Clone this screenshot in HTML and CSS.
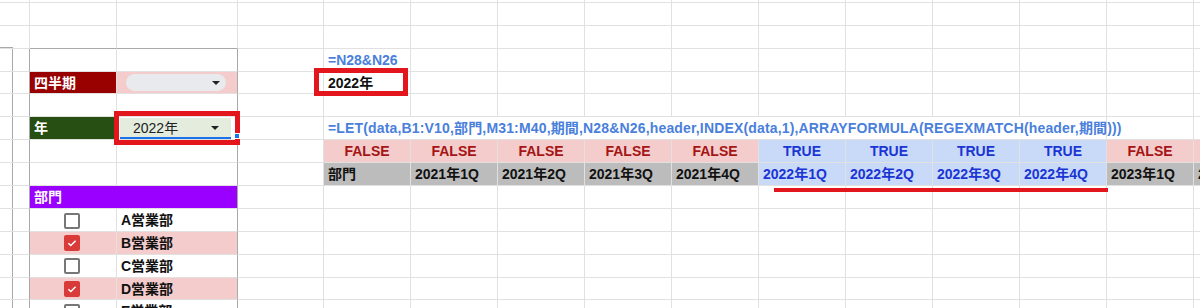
FILE: index.html
```html
<!DOCTYPE html>
<html lang="ja">
<head>
    <meta charset="UTF-8">
    <meta name="viewport" content="width=device-width, initial-scale=1.0">
    <title>期間フィルター</title>
    <link rel="stylesheet" href="styles.css">
</head>
<body>
    <table class="sheet">
        <colgroup>
            <col class="c-a">
            <col class="c-b">
            <col class="c-c">
            <col class="c-d">
            <col span="11" class="c-e">
        </colgroup>
        <tr><td></td><td></td><td></td><td></td><td></td><td></td><td></td><td></td><td></td><td></td><td></td><td></td><td></td><td></td><td></td></tr>
        <tr><td></td><td></td><td></td><td></td><td></td><td></td><td></td><td></td><td></td><td></td><td></td><td></td><td></td><td></td><td></td></tr>
        <tr><td class="side-top"></td><td class="top"></td><td class="top"></td><td></td><td></td><td></td><td></td><td></td><td></td><td></td><td></td><td></td><td></td><td></td><td></td></tr>
        <tr>
            <td class="side"></td><td></td><td class="pr"></td><td></td>
            <td class="fx">=N28&amp;N26</td>
            <td></td><td></td><td></td><td></td><td></td><td></td><td></td><td></td><td></td><td></td>
        </tr>
        <tr>
            <td class="side"></td>
            <td class="lbl q">四半期</td>
            <td class="pink opt pr"><div class="pill"><span class="arrow"></span></div></td>
            <td></td>
            <td class="b boxed">2022年<span class="mark m2"></span></td>
            <td></td><td></td><td></td><td></td><td></td><td></td><td></td><td></td><td></td><td></td>
        </tr>
        <tr><td class="side"></td><td></td><td class="pr"></td><td></td><td></td><td></td><td></td><td></td><td></td><td></td><td></td><td></td><td></td><td></td><td></td></tr>
        <tr>
            <td class="side"></td>
            <td class="lbl y">年</td>
            <td class="pick pr">
                <div class="drop"><span>2022年</span><span class="arrow"></span></div>
                <span class="mark m1"></span>
                <span class="handle"></span>
            </td>
            <td></td>
            <td class="fx long" colspan="9">=LET(data,B1:V10,部門,M31:M40,期間,N28&amp;N26,header,INDEX(data,1),ARRAYFORMULA(REGEXMATCH(header,期間)))</td>
            <td></td><td></td>
        </tr>
        <tr>
            <td class="side"></td><td></td><td class="pr"></td><td></td>
            <td class="f">FALSE</td>
            <td class="f">FALSE</td>
            <td class="f">FALSE</td>
            <td class="f">FALSE</td>
            <td class="f">FALSE</td>
            <td class="t">TRUE</td>
            <td class="t">TRUE</td>
            <td class="t">TRUE</td>
            <td class="t">TRUE</td>
            <td class="f">FALSE</td>
            <td class="f">FALSE</td>
        </tr>
        <tr>
            <td class="side"></td><td></td><td class="pr"></td><td></td>
            <td class="h">部門</td>
            <td class="h">2021年1Q</td>
            <td class="h">2021年2Q</td>
            <td class="h">2021年3Q</td>
            <td class="h">2021年4Q</td>
            <td class="h sel boxed">2022年1Q<span class="uline"></span></td>
            <td class="h sel">2022年2Q</td>
            <td class="h sel">2022年3Q</td>
            <td class="h sel">2022年4Q</td>
            <td class="h">2023年1Q</td>
            <td class="h">2023年2Q</td>
        </tr>
        <tr>
            <td class="side"></td>
            <td class="dept pr" colspan="2">部門</td>
            <td></td><td></td><td></td><td></td><td></td><td></td><td></td><td></td><td></td><td></td><td></td><td></td>
        </tr>
        <tr>
            <td class="side"></td>
            <td class="chk"><span class="box"></span></td>
            <td class="b pr">A営業部</td>
            <td></td><td></td><td></td><td></td><td></td><td></td><td></td><td></td><td></td><td></td><td></td><td></td>
        </tr>
        <tr>
            <td class="side"></td>
            <td class="chk pink"><span class="box on"><svg viewBox="0 0 12 12"><path d="M2.4 6.2l2.4 2.3 4.8-4.8"/></svg></span></td>
            <td class="b pink pr">B営業部</td>
            <td></td><td></td><td></td><td></td><td></td><td></td><td></td><td></td><td></td><td></td><td></td><td></td>
        </tr>
        <tr>
            <td class="side"></td>
            <td class="chk"><span class="box"></span></td>
            <td class="b pr">C営業部</td>
            <td></td><td></td><td></td><td></td><td></td><td></td><td></td><td></td><td></td><td></td><td></td><td></td>
        </tr>
        <tr>
            <td class="side"></td>
            <td class="chk pink"><span class="box on"><svg viewBox="0 0 12 12"><path d="M2.4 6.2l2.4 2.3 4.8-4.8"/></svg></span></td>
            <td class="b pink pr">D営業部</td>
            <td></td><td></td><td></td><td></td><td></td><td></td><td></td><td></td><td></td><td></td><td></td><td></td>
        </tr>
        <tr>
            <td class="side"></td>
            <td class="chk"><span class="box"></span></td>
            <td class="b pr">E営業部</td>
            <td></td><td></td><td></td><td></td><td></td><td></td><td></td><td></td><td></td><td></td><td></td><td></td>
        </tr>
    </table>
</body>
</html>
```

FILE: styles.css
```css
* {
    box-sizing: border-box;
}
body {
    margin: 0;
    overflow: hidden;
    background: #fff;
    font-family: "Liberation Sans", "Noto Sans CJK JP", sans-serif;
    font-size: 14px;
    color: #111;
}
.sheet {
    width: 1281px;
    margin-top: -20px;
    table-layout: fixed;
    border-collapse: separate;
    border-spacing: 0;
}
.c-a { width: 30px; }
.c-b { width: 87px; }
.c-c { width: 121px; }
.c-d { width: 86px; }
.c-e { width: 87px; }
tr {
    height: 22.9px;
}
td {
    padding: 0 4px;
    border-right: 1px solid #e1e1e1;
    border-bottom: 1px solid #e1e1e1;
    white-space: nowrap;
    line-height: 16px;
}

/* left panel */
td.side {
    border-right-color: #a9a9a9;
    background: linear-gradient(90deg, transparent 12px, #a9a9a9 12px 13px, transparent 13px);
}
td.side-top {
    background: linear-gradient(#a9a9a9, #a9a9a9) left bottom / 13px 1px no-repeat;
}
td.top { border-bottom-color: #a9a9a9; }
td.pr { border-right-color: #a9a9a9; }
.lbl { color: #fff; font-weight: bold; }
.q { background: #990000; }
.y { background: #274e13; }
.dept { background: #9900ff; color: #fff; font-weight: bold; }
.pink { background: #f4cccc; }
.b { font-weight: bold; }

td.opt { padding: 0 11px 0 9px; }
.pill {
    display: flex;
    justify-content: flex-end;
    align-items: center;
    height: 17px;
    padding-right: 6px;
    border-radius: 9px;
    background: #e8eaed;
}
.arrow {
    width: 0;
    height: 0;
    border-left: 4px solid transparent;
    border-right: 4px solid transparent;
    border-top: 4px solid #202124;
}
td.pick { position: relative; padding: 0; }
.drop {
    display: flex;
    justify-content: space-between;
    align-items: center;
    height: 21px;
    margin: 0 6px 0 3px;
    padding: 1px 12px 0 13px;
    background: #e3ecdd;
    border-bottom: 2px solid #1a73e8;
    color: #202124;
}
.handle {
    position: absolute;
    right: -3px;
    bottom: 0;
    width: 6px;
    height: 6px;
    background: #1a73e8;
    border: 1px solid #fff;
}

td.chk { text-align: center; padding: 0 2px 0 0; }
.box {
    display: inline-block;
    width: 16px;
    height: 16px;
    border: 2px solid #777;
    border-radius: 2px;
    vertical-align: middle;
}
.box.on { background: #d93a3a; border-color: #d93a3a; }
.box svg { display: block; width: 12px; height: 12px; }
.box path { fill: none; stroke: #fff; stroke-width: 1.5; }

/* result table */
.fx { color: #4a7fdc; font-weight: bold; }
.fx.long { letter-spacing: 0.16px; }
.f { background: #f4cccc; color: #a51515; font-weight: bold; text-align: center; }
.t { background: #c9daf8; color: #1a35d4; font-weight: bold; text-align: center; }
.h { background: #bcbcbc; font-weight: bold; }
.h.sel { background: #c9daf8; color: #1a35d4; }

/* red annotations */
td.boxed { position: relative; }
.mark {
    position: absolute;
    border: 5px solid #e3161d;
}
.m1 { top: -6px; bottom: -6px; left: -3px; right: -3px; }
.m2 { top: -4px; bottom: -3px; left: -10px; right: 2px; }
.uline {
    position: absolute;
    left: 15px;
    top: 25px;
    width: 334px;
    height: 4px;
    background: #e3161d;
}
```
